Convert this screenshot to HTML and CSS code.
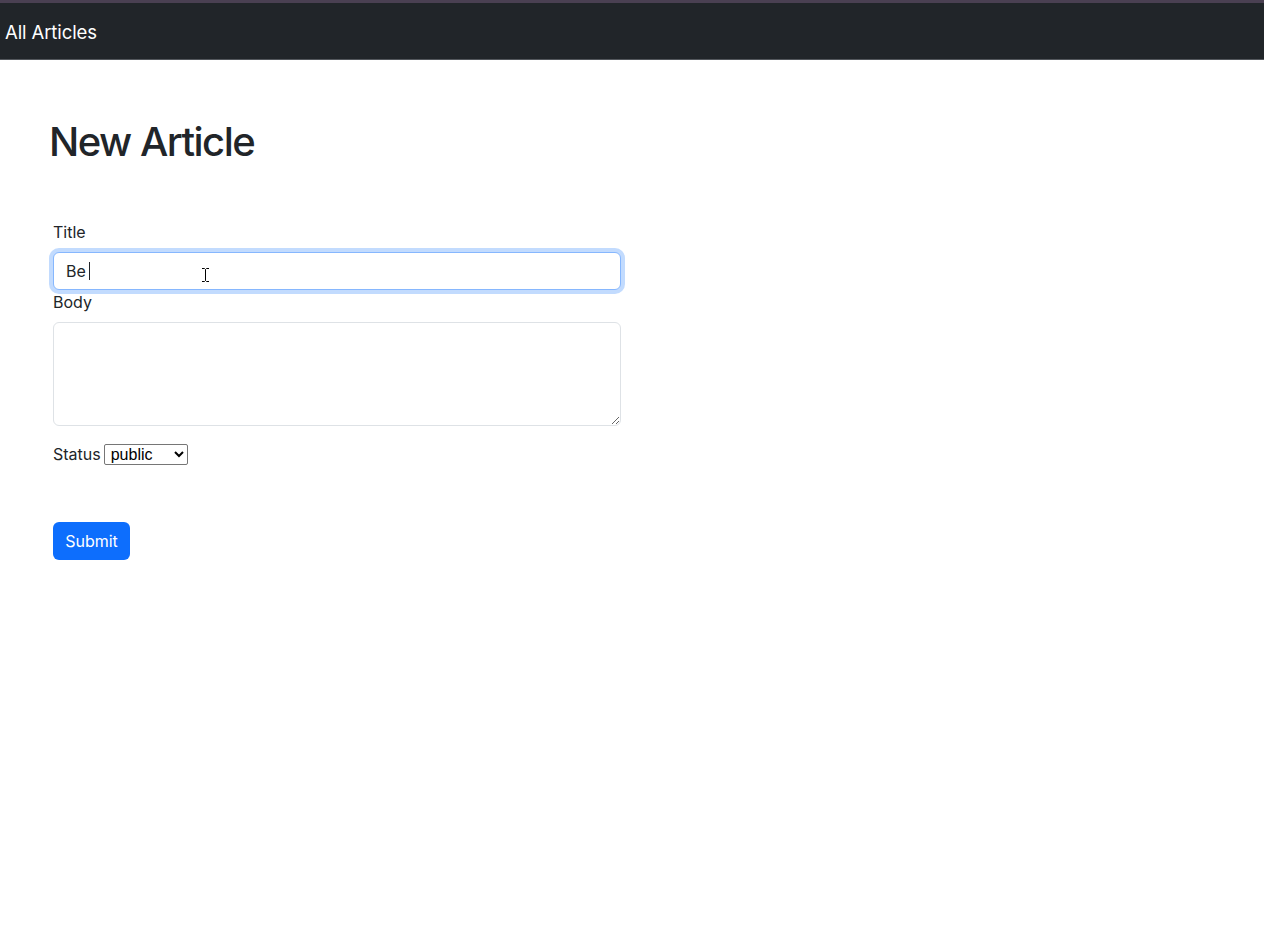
FILE: index.html
```html
<!DOCTYPE html>
<html lang="en">
<head>
<meta charset="utf-8">
<title>New Article</title>
<link rel="stylesheet" href="styles.css">
</head>
<body>
<div class="topline"></div>
<nav class="navbar">
  <a class="brand" href="#">All Articles</a>
</nav>
<main class="page">
  <h1 class="title">New Article</h1>
  <form class="form">
    <label class="form-label" for="t">Title</label>
    <div class="field">
      <input id="t" class="form-control is-focused" type="text" value="Be ">
      <span class="caret"></span>
      <svg class="mouse" width="9" height="16" viewBox="0 0 9 16"><path d="M1 1.5h2.5l1 1 1-1H8M4.5 2.5v11M1 14.5h2.5l1-1 1 1H8" fill="none" stroke="#fff" stroke-width="2.6"/><path d="M1 1.5h2.5l1 1 1-1H8M4.5 2.5v11M1 14.5h2.5l1-1 1 1H8" fill="none" stroke="#000" stroke-width="1"/></svg>
    </div>
    <label class="form-label" for="b">Body</label>
    <textarea id="b" class="form-control area"></textarea>
    <div class="status-row">
      <label for="s">Status</label>
      <select id="s" class="status">
        <option>public</option>
        <option>private</option>
        <option>archived</option>
      </select>
    </div>
    <button type="button" class="btn">Submit</button>
  </form>
</main>
</body>
</html>
```
FILE: styles.css
```css
* { box-sizing: border-box; }
html, body { margin: 0; padding: 0; background: #fff; }
body {
  font-family: Inter, "Noto Sans", "Liberation Sans", sans-serif;
  font-size: 16px;
  line-height: 24px;
  color: #212529;
}
.topline { height: 3px; background: #4a4052; }
.navbar {
  height: 57px;
  background: #212529;
  border-bottom: 1px solid #53575c;
  display: flex;
  align-items: center;
  padding: 0 5px;
}
.brand {
  color: #fff;
  text-decoration: none;
  font-size: 18.5px;
  line-height: 28px;
  margin-top: 2px;
  letter-spacing: -0.1px;
}
.page { padding: 58px 0 0 49px; }
.title {
  margin: 0;
  font-size: 40px;
  font-weight: 500;
  line-height: 48px;
  letter-spacing: -1.5px;
}
.form { width: 568px; margin: 54px 0 0 4px; }
.form-label { display: block; margin-bottom: 8px; }
.field { position: relative; }
.form-control {
  display: block;
  width: 100%;
  font: inherit;
  color: #212529;
  border: 1px solid #dee2e6;
  border-radius: 6px;
  padding: 6px 12px;
  background: #fff;
  outline: none;
}
.is-focused {
  height: 38px;
  border-color: #86b7fe;
  box-shadow: 0 0 0 4px rgba(13, 110, 253, 0.25);
}
.caret {
  position: absolute;
  left: 36px;
  top: 10px;
  width: 1px;
  height: 18px;
  background: #212529;
}
.mouse { position: absolute; left: 148px; top: 15px; }
.area { height: 104px; resize: vertical; margin-bottom: 16px; }
.status-row { display: flex; align-items: center; gap: 3px; }
.status {
  width: 84px;
  height: 21px;
  font-family: "Liberation Sans", Arial, sans-serif;
  font-size: 16px;
  color: #000;
  background: #fff;
  border: 1px solid #767676;
  border-radius: 2px;
  padding: 0 0 0 2px;
}
.btn {
  margin-top: 56px;
  width: 77px;
  height: 38px;
  border: none;
  border-radius: 6px;
  background: #0d6efd;
  color: #fff;
  font: inherit;
  padding: 0;
}
```
